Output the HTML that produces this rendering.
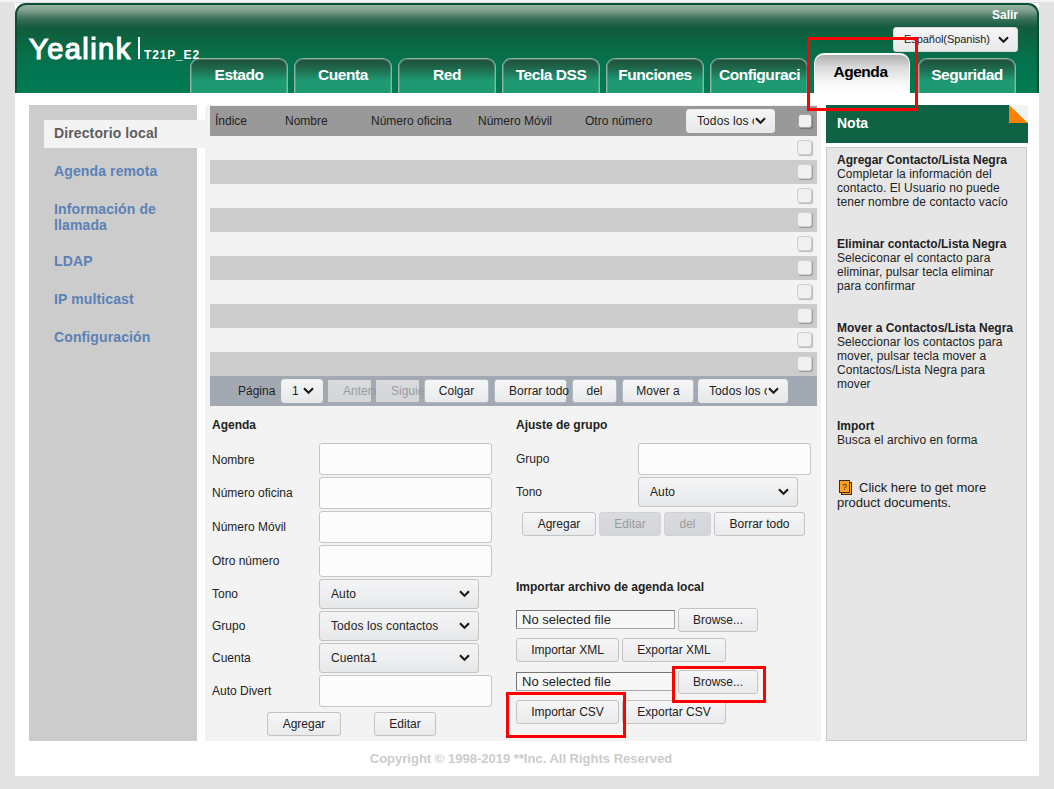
<!DOCTYPE html>
<html lang="es">
<head>
<meta charset="utf-8">
<title>Yealink T21P_E2 - Agenda</title>
<style>
*{box-sizing:border-box;margin:0;padding:0}
html,body{width:1054px;height:789px;overflow:hidden}
body{background:#e2e2e2;font-family:"Liberation Sans",Arial,sans-serif;font-size:12px;color:#222;position:relative}
.abs{position:absolute}
#topstrip{left:0;top:0;width:1054px;height:2px;background:#f4f4f6}
#page{left:15px;top:3px;width:1024px;height:773px;background:#fff}
/* header */
#hdr{left:0;top:0;width:1024px;height:90px;border-radius:11px 11px 0 0;border:2px solid #0a4f33;border-bottom:0;
 background:linear-gradient(180deg,#96b3a3 0,#82a392 5px,#648b78 9px,#4a7963 12px,#2f6a52 16px,#1d6045 20px,#115d3d 23px,#0f5f3f 28px,#0a6a45 42px,#047450 60px,#007a53 85px)}
#logo{left:14px;top:29px;font-weight:normal;font-size:29px;line-height:34px;color:#fff;letter-spacing:1.45px;-webkit-text-stroke:1.2px #fff}
#lbar{left:123px;top:34px;width:2px;height:22px;background:#fff}
#model{z-index:5;left:129px;top:45px;font-weight:bold;font-size:12px;line-height:14px;color:#fff;letter-spacing:.85px}
#salir{right:21px;top:6px;font-weight:bold;font-size:12px;line-height:13px;color:#fff}
#lang{left:878px;top:24px;width:125px;height:25px;border-radius:3px;background:linear-gradient(#f5f5f6,#e8e9eb);border:1px solid #d8d8d8;font-size:11px;line-height:23px;padding-left:10px;letter-spacing:-.06px;color:#222;white-space:nowrap;overflow:hidden}
.chev{position:absolute;right:8px;top:50%;margin-top:-4px;width:11px;height:8px}
.tab{position:absolute;top:55px;width:98px;height:35px;border:1px solid #93b0a2;border-bottom:0;border-radius:9px 9px 0 0;
 background:linear-gradient(180deg,#1e4f39 0,#1f6a4e 10px,#1e9a73 22px,#1e9a73 100%);color:#fff;font-weight:bold;font-size:15.5px;line-height:31px;text-align:center;white-space:nowrap;overflow:hidden;letter-spacing:-.45px;box-shadow:inset 0 1px 0 rgba(200,220,210,.28),inset 1px 0 0 rgba(200,220,210,.25),inset -1px 0 0 rgba(200,220,210,.25)}
.tab.on{top:50px;height:40px;width:96px;border:1px solid #fff;border-top-width:2px;border-bottom:0;background:linear-gradient(180deg,#adadad 0,#d9d9d9 12px,#f4f4f4 26px,#fff 36px);color:#000;line-height:33px;border-radius:10px 10px 0 0;box-shadow:none;padding-right:3px}
/* sidebar */
#side{left:14px;top:102px;width:168px;height:636px;background:#ccc}
.mi{position:absolute;left:25px;font-weight:bold;font-size:14px;line-height:16px;color:#5b82b5;letter-spacing:.12px}
#miact{left:29px;top:117px;width:161px;height:28px;background:#f3f3f3;color:#5e5e5e;font-weight:bold;font-size:14px;line-height:26px;padding-left:10px;letter-spacing:.12px}
/* main */
#main{left:190px;top:102px;width:616px;height:636px;background:#f3f3f3}
#thead{left:5px;top:1px;width:607px;height:30px;background:#999;color:#222;font-size:12px;line-height:30px}
#thead>span{position:absolute;top:0}
.row{position:absolute;left:5px;width:607px;height:24px}
.row.g{background:#ccc}
.cb{position:absolute;left:592px;width:15px;height:15px;border-radius:3px;background:#eff0f2;border:1px solid #cfcfcf;box-shadow:1px 1px 1px rgba(0,0,0,.25)}
#pager{left:5px;top:271px;width:607px;height:30px;background:#a2a9b3}
#pager .btn{border-color:#b4bac3}
#pager .sel,#thead .sel{border-color:#e9eaec}
#pager .btn.dis{border-color:#a6acb6 #d4d6da;border-radius:2px}
.btn{position:absolute;height:24px;border:1px solid #c3c3c3;border-radius:3px;background:linear-gradient(#f6f6f7,#e9eaec);color:#222;font-size:12px;line-height:22px;text-align:center;white-space:nowrap;overflow:hidden}
.btn.dis{color:#9a9c9f;background:linear-gradient(#dadbde,#d3d5d9);border-color:#d0d2d5}
.sel{position:absolute;height:30px;border:1px solid #c3c3c3;border-radius:3px;background:linear-gradient(#f5f5f6,#e7e8ea);color:#222;font-size:12px;line-height:29px;padding-left:11px;letter-spacing:.1px;white-space:nowrap;overflow:hidden}
.sel.sm{height:24px;line-height:22px}
.sel .t{display:block;overflow:hidden;margin-right:20px}
.inp{position:absolute;height:32px;width:173px;border:1px solid #c6c6c6;border-radius:3px;background:#fcfcfc}
.lbl{position:absolute;font-size:12px;line-height:14px;color:#222;white-space:nowrap}
.lbl.b{font-weight:bold}
.file{position:absolute;height:19px;width:159px;border:1px solid;border-color:#777 #a6a6a6 #a6a6a6 #777;background:#f7f7f7;font-size:13px;line-height:17px;padding-left:5px;color:#222;white-space:nowrap}
.red{position:absolute;border:3px solid #f00;z-index:20}
/* nota */
#notah{left:811px;top:102px;width:202px;height:38px;background:#0f6344;color:#fff;font-weight:bold;font-size:14px;line-height:36px;padding-left:11px}
#notab{left:811px;top:144px;width:201px;height:594px;background:#e6e6e6;border:1px solid #c9c9c9;font-size:12px;line-height:14px;color:#222;padding:5px 0 0 10px;letter-spacing:.07px}
#notab b{display:block;letter-spacing:0}
#notab p{margin-bottom:28px;white-space:nowrap}
#fold{left:994px;top:102px;width:19px;height:18px;background:linear-gradient(to bottom left,#f3f3f3 0,#f3f3f3 49%,#ff7f00 51%,#ff7f00 100%)}
#more{font-size:13px;line-height:15px;color:#1a1a1a;position:relative;top:5px;letter-spacing:0;text-indent:22px}
#docico{position:absolute;left:2px;top:0px;width:14px;height:16px}
#foot{left:-6px;top:748px;width:1024px;text-align:center;font-weight:bold;font-size:13px;line-height:15px;color:#ccc}
</style>
</head>
<body>
<div id="topstrip" class="abs"></div>
<div id="page" class="abs">
  <div id="hdr" class="abs"></div>
  <div id="logo" class="abs">Yealink</div>
  <div id="lbar" class="abs"></div>
  <div id="model" class="abs">T21P_E2</div>
  <div id="salir" class="abs">Salir</div>
  <div id="lang" class="abs">Español(Spanish)<svg class="chev" viewBox="0 0 11 8"><path d="M1 1.2 L5.5 5.8 L10 1.2" fill="none" stroke="#1c1c1c" stroke-width="2.1"/></svg></div>

  <div class="tab" style="left:175px">Estado</div>
  <div class="tab" style="left:279px">Cuenta</div>
  <div class="tab" style="left:383px">Red</div>
  <div class="tab" style="left:487px">Tecla DSS</div>
  <div class="tab" style="left:591px">Funciones</div>
  <div class="tab" style="left:695px;text-align:left;padding-left:8px"><span style="display:block;width:81px;overflow:hidden">Configuración</span></div>
  <div class="tab on" style="left:799px">Agenda</div>
  <div class="tab" style="left:903px">Seguridad</div>

  <div id="side" class="abs">
    <div class="mi" style="top:58px">Agenda remota</div>
    <div class="mi" style="top:96px">Información de<br>llamada</div>
    <div class="mi" style="top:148px">LDAP</div>
    <div class="mi" style="top:186px">IP multicast</div>
    <div class="mi" style="top:224px">Configuración</div>
  </div>
  <div id="main" class="abs">
    <div id="thead" class="abs">
      <span style="left:5px">Índice</span><span style="left:75px">Nombre</span><span style="left:161px">Número oficina</span><span style="left:268px">Número Móvil</span><span style="left:375px">Otro número</span>
      <div class="sel sm" style="left:476px;top:3px;width:89px;padding-left:10px"><span class="t">Todos los contactos</span><svg class="chev" viewBox="0 0 11 8"><path d="M1 1.2 L5.5 5.8 L10 1.2" fill="none" stroke="#1c1c1c" stroke-width="2.1"/></svg></div>
    </div>
    <div class="row" style="top:31px"></div>
    <div class="row g" style="top:55px"></div>
    <div class="row" style="top:79px"></div>
    <div class="row g" style="top:103px"></div>
    <div class="row" style="top:127px"></div>
    <div class="row g" style="top:151px"></div>
    <div class="row" style="top:175px"></div>
    <div class="row g" style="top:199px"></div>
    <div class="row" style="top:223px"></div>
    <div class="row g" style="top:247px"></div>
    <div class="cb" style="top:9px;border-color:#a5a5a5;left:593px;width:14px;height:14px"></div>
    <div class="cb" style="top:35px"></div>
    <div class="cb" style="top:59px"></div>
    <div class="cb" style="top:83px"></div>
    <div class="cb" style="top:107px"></div>
    <div class="cb" style="top:131px"></div>
    <div class="cb" style="top:155px"></div>
    <div class="cb" style="top:179px"></div>
    <div class="cb" style="top:203px"></div>
    <div class="cb" style="top:227px"></div>
    <div class="cb" style="top:251px"></div>
    <div id="pager" class="abs">
      <div class="lbl" style="left:28px;top:8px">Página</div>
      <div class="sel sm" style="left:71px;top:3px;width:42px;padding-left:10px"><span class="t">1</span><svg class="chev" viewBox="0 0 11 8"><path d="M1 1.2 L5.5 5.8 L10 1.2" fill="none" stroke="#1c1c1c" stroke-width="2.1"/></svg></div>
      <div class="btn dis" style="left:118px;top:3px;width:43px;text-align:left;padding-left:14px;overflow:visible">Anterior</div>
      <div class="btn dis" style="left:166px;top:3px;width:43px;text-align:left;padding-left:14px;overflow:visible">Siguiente</div>
      <div class="btn" style="left:214px;top:3px;width:65px">Colgar</div>
      <div class="btn" style="left:284px;top:3px;width:73px;text-align:left;padding-left:14px;overflow:visible">Borrar todo</div>
      <div class="btn" style="left:362px;top:3px;width:45px">del</div>
      <div class="btn" style="left:412px;top:3px;width:72px">Mover a</div>
      <div class="sel sm" style="left:488px;top:3px;width:90px;padding-left:10px"><span class="t">Todos los contactos</span><svg class="chev" viewBox="0 0 11 8"><path d="M1 1.2 L5.5 5.8 L10 1.2" fill="none" stroke="#1c1c1c" stroke-width="2.1"/></svg></div>
    </div>

    <div class="lbl b" style="left:7px;top:313px">Agenda</div>
    <div class="lbl" style="left:7px;top:348px">Nombre</div>
    <div class="lbl" style="left:7px;top:381px">Número oficina</div>
    <div class="lbl" style="left:7px;top:415px">Número Móvil</div>
    <div class="lbl" style="left:7px;top:449px">Otro número</div>
    <div class="lbl" style="left:7px;top:482px">Tono</div>
    <div class="lbl" style="left:7px;top:514px">Grupo</div>
    <div class="lbl" style="left:7px;top:546px">Cuenta</div>
    <div class="lbl" style="left:7px;top:579px">Auto Divert</div>
    <div class="inp" style="left:114px;top:338px"></div>
    <div class="inp" style="left:114px;top:372px"></div>
    <div class="inp" style="left:114px;top:406px"></div>
    <div class="inp" style="left:114px;top:440px"></div>
    <div class="sel" style="left:114px;top:474px;width:160px"><span class="t">Auto</span><svg class="chev" viewBox="0 0 11 8"><path d="M1 1.2 L5.5 5.8 L10 1.2" fill="none" stroke="#1c1c1c" stroke-width="2.1"/></svg></div>
    <div class="sel" style="left:114px;top:506px;width:160px"><span class="t">Todos los contactos</span><svg class="chev" viewBox="0 0 11 8"><path d="M1 1.2 L5.5 5.8 L10 1.2" fill="none" stroke="#1c1c1c" stroke-width="2.1"/></svg></div>
    <div class="sel" style="left:114px;top:538px;width:160px"><span class="t">Cuenta1</span><svg class="chev" viewBox="0 0 11 8"><path d="M1 1.2 L5.5 5.8 L10 1.2" fill="none" stroke="#1c1c1c" stroke-width="2.1"/></svg></div>
    <div class="inp" style="left:114px;top:570px"></div>
    <div class="btn" style="left:62px;top:607px;width:74px">Agregar</div>
    <div class="btn" style="left:169px;top:607px;width:62px">Editar</div>

    <div class="lbl b" style="left:311px;top:313px">Ajuste de grupo</div>
    <div class="lbl" style="left:311px;top:347px">Grupo</div>
    <div class="lbl" style="left:311px;top:380px">Tono</div>
    <div class="inp" style="left:433px;top:338px"></div>
    <div class="sel" style="left:433px;top:372px;width:160px"><span class="t">Auto</span><svg class="chev" viewBox="0 0 11 8"><path d="M1 1.2 L5.5 5.8 L10 1.2" fill="none" stroke="#1c1c1c" stroke-width="2.1"/></svg></div>
    <div class="btn" style="left:317px;top:407px;width:74px">Agregar</div>
    <div class="btn dis" style="left:394px;top:407px;width:62px">Editar</div>
    <div class="btn dis" style="left:459px;top:407px;width:47px">del</div>
    <div class="btn" style="left:509px;top:407px;width:91px">Borrar todo</div>

    <div class="lbl b" style="left:311px;top:475px">Importar archivo de agenda local</div>
    <div class="file" style="left:311px;top:505px">No selected file</div>
    <div class="btn" style="left:473px;top:503px;width:80px">Browse...</div>
    <div class="btn" style="left:311px;top:533px;width:103px">Importar XML</div>
    <div class="btn" style="left:417px;top:533px;width:104px">Exportar XML</div>
    <div class="file" style="left:311px;top:567px">No selected file</div>
    <div class="btn" style="left:473px;top:565px;width:80px">Browse...</div>
    <div class="btn" style="left:311px;top:595px;width:103px">Importar CSV</div>
    <div class="btn" style="left:417px;top:595px;width:104px">Exportar CSV</div>
  </div>
  <div id="miact" class="abs">Directorio local</div>

  <div id="notah" class="abs">Nota</div>
  <div id="notab" class="abs">
    <p><b>Agregar Contacto/Lista Negra</b>Completar la información del<br>contacto. El Usuario no puede<br>tener nombre de contacto vacío</p>
    <p><b>Eliminar contacto/Lista Negra</b>Seleciconar el contacto para<br>eliminar, pulsar tecla eliminar<br>para confirmar</p>
    <p><b>Mover a Contactos/Lista Negra</b>Seleccionar los contactos para<br>mover, pulsar tecla mover a<br>Contactos/Lista Negra para<br>mover</p>
    <p><b>Import</b>Busca el archivo en forma</p>
    <div id="more"><svg id="docico" viewBox="0 0 14 16"><rect x="2.5" y="2.5" width="10" height="12" fill="#ffa01e" stroke="#3a2f1c" stroke-width="1"/><rect x="0.5" y="0.5" width="10" height="12" fill="#ffa01e" stroke="#3a2f1c" stroke-width="1"/><text x="5.6" y="9.8" font-family="Liberation Sans, sans-serif" font-size="9" font-weight="normal" text-anchor="middle" fill="#2a2216">?</text></svg>Click here to get more<br>product documents.</div>
  </div>
  <div id="fold" class="abs"></div>
  <div class="red" style="left:792px;top:34px;width:111px;height:74px"></div>
  <div class="red" style="left:657px;top:663px;width:94px;height:37px"></div>
  <div class="red" style="left:491px;top:689px;width:120px;height:46px"></div>
  <div id="foot" class="abs">Copyright © 1998-2019 **Inc. All Rights Reserved</div>
</div>
</body>
</html>
